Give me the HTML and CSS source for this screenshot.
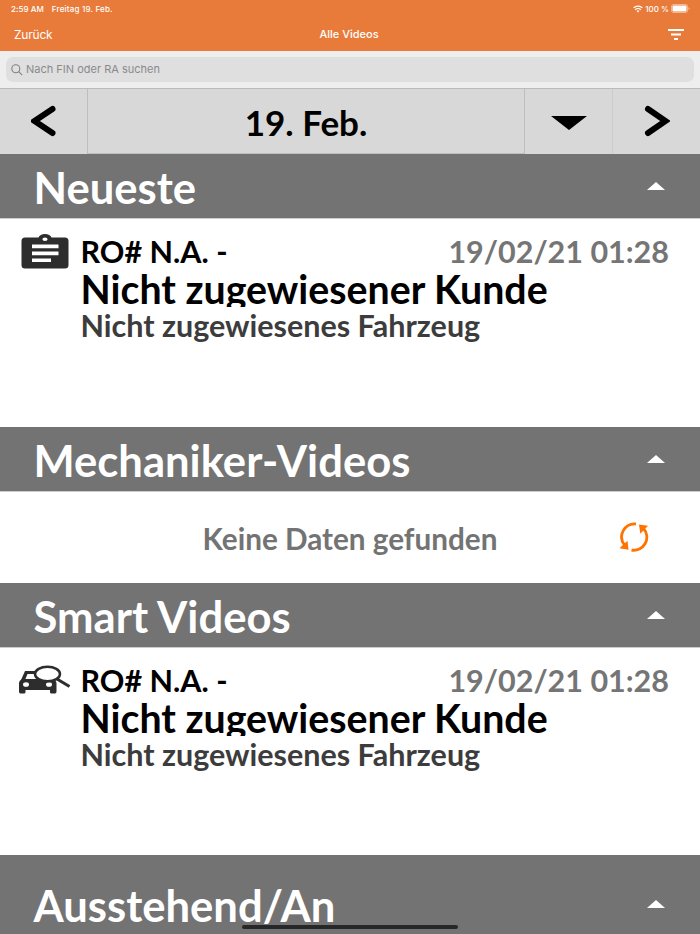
FILE: index.html
```html
<!DOCTYPE html>
<html lang="de">
<head>
    <meta charset="UTF-8">
    <meta name="viewport" content="width=device-width, initial-scale=1.0">
    <title>Alle Videos</title>
    <link rel="stylesheet" href="styles.css">
</head>
<body>
    <header class="top">
        <div class="status-bar">
            <span class="clock">2:59 AM</span>
            <span class="day">Freitag 19. Feb.</span>
            <svg class="wifi" width="10" height="8" viewBox="0 0 10 8" fill="none" stroke="#fff" stroke-width="1.3">
                <path d="M0.6 2.9a6.2 6.2 0 0 1 8.8 0M2.2 4.7a4 4 0 0 1 5.6 0"/>
                <path d="M5 7.5L3.6 6a2 2 0 0 1 2.8 0z" fill="#fff" stroke="none"/>
            </svg>
            <span class="percent">100 %</span>
            <svg class="battery" width="19" height="9" viewBox="0 0 19 9">
                <rect x="0.5" y="0.5" width="16" height="8" rx="2" fill="none" stroke="#fff" stroke-opacity="0.45"/>
                <rect x="1.5" y="1.5" width="14" height="6" rx="1" fill="#fff"/>
                <path d="M17.5 3v3q1-.5 1-1.5t-1-1.5z" fill="#fff" fill-opacity="0.5"/>
            </svg>
        </div>
        <nav class="nav-bar">
            <span class="back">Zurück</span>
            <span class="nav-title">Alle Videos</span>
            <svg class="filter" width="16" height="11" viewBox="0 0 16 11" fill="#fff">
                <path d="M0 0h16v1.900H0zM3 4.600h10v1.900H3zM6 9h4v1.900H6z"/>
            </svg>
        </nav>
    </header>

    <div class="search">
        <div class="search-field">
            <svg width="12" height="12" viewBox="0 0 12 12" fill="none" stroke="#808084" stroke-width="1.1">
                <circle cx="4.800" cy="4.800" r="4"/>
                <path d="M7.700 7.700L11.200 11.200"/>
            </svg>
            <span>Nach FIN oder RA suchen</span>
        </div>
    </div>

    <div class="date-bar">
        <div class="date-cell">
            <svg width="26" height="32" viewBox="0 0 26 32" fill="none" stroke="#000" stroke-width="6">
                <path d="M21.500 4L3.500 16l18 12" stroke-linecap="round"/>
            </svg>
        </div>
        <div class="date-current">19. Feb.</div>
        <div class="date-cell date-drop">
            <svg width="36" height="14" viewBox="0 0 36 14"><path d="M0 0h36L18 14z"/></svg>
        </div>
        <div class="date-cell date-next">
            <svg width="26" height="32" viewBox="0 0 26 32" fill="none" stroke="#000" stroke-width="6">
                <path d="M4 4L21.500 16L4 28" stroke-linecap="round"/>
            </svg>
        </div>
    </div>

    <main>
        <h2 class="section">Neueste <svg width="18" height="8" viewBox="0 0 18 8"><path d="M0 8h18L9 0z"/></svg></h2>
        <article class="video">
            <div class="video-icon">
                <svg width="48" height="35" viewBox="0 0 48 35">
                    <path d="M4 3.500H17.500Q19 0 24 0T30.500 3.500H44a3.500 3.500 0 0 1 3.500 3.500V31a3.500 3.500 0 0 1-3.500 3.500H4A3.500 3.500 0 0 1 .5 31V7A3.500 3.500 0 0 1 4 3.500z" fill="#2d2d2d"/>
                    <ellipse cx="24" cy="5.200" rx="2.600" ry="1.800" fill="#fff"/>
                    <path d="M11 10.500h26.500v3.700H11zM11 17.500h26.500v3.700H11zM11 24.400h19v3.600H11z" fill="#fff"/>
                </svg>
            </div>
            <div class="video-info">
                <div class="video-head"><span>RO# N.A. -</span><time>19/02/21 01:28</time></div>
                <div class="customer">Nicht zugewiesener Kunde</div>
                <div class="vehicle">Nicht zugewiesenes Fahrzeug</div>
            </div>
        </article>

        <h2 class="section">Mechaniker-Videos <svg width="18" height="8" viewBox="0 0 18 8"><path d="M0 8h18L9 0z"/></svg></h2>
        <div class="empty">
            <span>Keine Daten gefunden</span>
            <svg class="reload" width="30" height="30" viewBox="0 0 30 30">
                <g fill="none" stroke="#ff7300" stroke-width="2.800">
                    <path d="M17 2A13 13 0 0 0 5.500 23"/>
                    <path d="M12.500 28A13 13 0 0 0 24.500 6.500"/>
                </g>
                <path d="M.5 26.200L9.500 27.700L8.500 18.800zM20 2.600L29 3.800L21.300 11.800z" fill="#ff7300"/>
            </svg>
        </div>

        <h2 class="section">Smart Videos <svg width="18" height="8" viewBox="0 0 18 8"><path d="M0 8h18L9 0z"/></svg></h2>
        <article class="video video-smart">
            <div class="video-icon">
                <svg width="54" height="30" viewBox="0 0 54 30">
                    <path d="M7 6H22V9H9.500L7 15H3z" fill="#2d2d2d"/>
                    <path d="M4.500 14H34.500Q38.500 15 38.500 18.500V26.500Q38.500 28.500 37 28.500H33.500Q32 28.500 32 27V25H7.500V27Q7.500 28.500 6 28.500H2.500Q1 28.500 1 26.500V18.500Q1 15 4.500 14z" fill="#2d2d2d"/>
                    <ellipse cx="8" cy="19.500" rx="3" ry="2.300" fill="#fff"/>
                    <ellipse cx="31" cy="19.500" rx="3" ry="2.300" fill="#fff"/>
                    <ellipse cx="29.500" cy="9" rx="12.500" ry="7.300" fill="#fff" stroke="#2d2d2d" stroke-width="2.500"/>
                    <path d="M39 14L51.500 21.500" stroke="#2d2d2d" stroke-width="3"/>
                </svg>
            </div>
            <div class="video-info">
                <div class="video-head"><span>RO# N.A. -</span><time>19/02/21 01:28</time></div>
                <div class="customer">Nicht zugewiesener Kunde</div>
                <div class="vehicle">Nicht zugewiesenes Fahrzeug</div>
            </div>
        </article>

        <h2 class="section section-last">Ausstehend/An <svg width="18" height="8" viewBox="0 0 18 8"><path d="M0 8h18L9 0z"/></svg></h2>
    </main>
    <div class="home-indicator"></div>
</body>
</html>
```
FILE: styles.css
```css
* {
    box-sizing: border-box;
}
body {
    margin: 0;
    height: 934px;
    overflow: hidden;
    position: relative;
    background-color: #fff;
    font-family: Lato, sans-serif;
    font-weight: 700;
}
svg {
    display: block;
    flex-shrink: 0;
}
.top {
    height: 51px;
    background-color: #e97b3a;
    color: #fff;
    font-family: Inter, sans-serif;
}
.status-bar {
    display: flex;
    align-items: center;
    height: 17px;
    padding: 0 10px 0 11px;
    font-size: 8px;
    font-weight: 500;
}
.clock {
    margin-right: 8px;
    letter-spacing: 0.05px;
}
.day {
    letter-spacing: 0.2px;
}
.wifi {
    margin-left: auto;
    margin-right: 2px;
}
.battery {
    margin-left: 2px;
}
.nav-bar {
    display: grid;
    grid-template-columns: 1fr auto 1fr;
    align-items: center;
    height: 34px;
    padding: 0 16px 0 14px;
    font-size: 12px;
    font-weight: 400;
}
.back {
    letter-spacing: -0.2px;
}
.nav-title {
    font-size: 11px;
    font-weight: 500;
}
.filter {
    justify-self: end;
}
.search {
    height: 37px;
    padding: 6px;
    background-color: #eee;
}
.search-field {
    display: flex;
    align-items: center;
    gap: 3px;
    height: 25px;
    padding-left: 5px;
    border-radius: 7px;
    background-color: #dfdfdf;
    color: #8a8a8e;
    font-family: Inter, sans-serif;
    font-size: 11px;
    font-weight: 400;
}
.search-field span {
    margin-bottom: 1px;
}
.date-bar {
    display: flex;
    height: 66px;
    border-top: 1px solid #bbb;
    background-color: #d8d8d8;
}
.date-cell {
    display: flex;
    justify-content: center;
    align-items: center;
    width: 87px;
}
.date-cell svg {
    margin-bottom: 1px;
}
.date-drop svg {
    margin: 3px 0 0;
}
.date-current {
    flex: 1;
    border: 1px solid #bebebe;
    border-top: none;
    line-height: 67px;
    font-size: 35px;
    text-align: center;
}
.date-next {
    width: 88px;
    border-left: 1px solid #ccc;
}
.section {
    display: flex;
    justify-content: space-between;
    align-items: center;
    height: 65px;
    margin: 0;
    padding: 1px 35px 0 33.5px;
    border-bottom: 1px solid #ccc;
    background-color: #737373;
    color: #fff;
    font-size: 43.6px;
    font-weight: 700;
}
.section svg {
    margin-bottom: 1px;
    fill: #fff;
}
.section-last {
    height: 100px;
}
.section-last svg {
    margin-bottom: 3px;
}
.video {
    display: flex;
    height: 208px;
    padding: 15px 31px 0 21px;
}
.video-icon {
    width: 59.5px;
}
.video-smart {
    height: 207px;
}
.video-smart .video-icon {
    padding-top: 2px;
    margin-left: -3px;
    width: 62.5px;
}
.video-info {
    flex: 1;
}
.video-head {
    display: flex;
    justify-content: space-between;
    line-height: 35px;
    font-size: 30.5px;
    color: #000;
}
.video-head time {
    color: #757575;
}
.customer {
    height: 38px;
    overflow: hidden;
    line-height: 40px;
    font-size: 39.3px;
    color: #000;
}
.vehicle {
    line-height: 36px;
    font-size: 30.5px;
    color: #3c3c3c;
}
.empty {
    display: grid;
    grid-template-columns: 1fr auto 1fr;
    align-items: center;
    height: 91px;
    padding: 0 51px;
    font-size: 29.7px;
    color: #737373;
}
.empty span {
    grid-column: 2;
    padding-top: 1px;
}
.reload {
    justify-self: end;
    margin-bottom: 1px;
}
.home-indicator {
    position: absolute;
    left: 242px;
    bottom: 5px;
    width: 216px;
    height: 4px;
    border-radius: 2px;
    background-color: #272727;
}
```
